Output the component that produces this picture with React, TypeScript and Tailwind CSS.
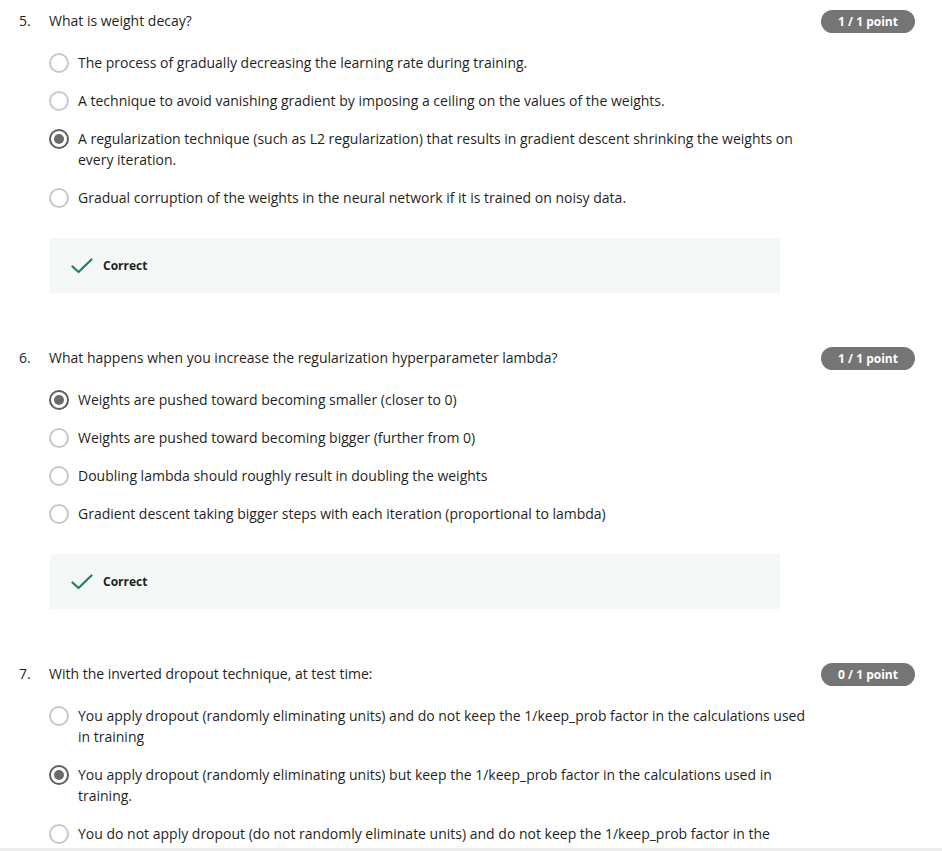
import React from 'react'

type Question = {
  num: string
  text: string
  score: string
  options: string[]
  selected: number
  correct: boolean
}

const questions: Question[] = [
  {
    num: '5.',
    text: 'What is weight decay?',
    score: '1 / 1 point',
    options: [
      'The process of gradually decreasing the learning rate during training.',
      'A technique to avoid vanishing gradient by imposing a ceiling on the values of the weights.',
      'A regularization technique (such as L2 regularization) that results in gradient descent shrinking the weights on every iteration.',
      'Gradual corruption of the weights in the neural network if it is trained on noisy data.',
    ],
    selected: 2,
    correct: true,
  },
  {
    num: '6.',
    text: 'What happens when you increase the regularization hyperparameter lambda?',
    score: '1 / 1 point',
    options: [
      'Weights are pushed toward becoming smaller (closer to 0)',
      'Weights are pushed toward becoming bigger (further from 0)',
      'Doubling lambda should roughly result in doubling the weights',
      'Gradient descent taking bigger steps with each iteration (proportional to lambda)',
    ],
    selected: 0,
    correct: true,
  },
  {
    num: '7.',
    text: 'With the inverted dropout technique, at test time:',
    score: '0 / 1 point',
    options: [
      'You apply dropout (randomly eliminating units) and do not keep the 1/keep_prob factor in the calculations used in training',
      'You apply dropout (randomly eliminating units) but keep the 1/keep_prob factor in the calculations used in training.',
      'You do not apply dropout (do not randomly eliminate units) and do not keep the 1/keep_prob factor in the calculations used in training',
    ],
    selected: 1,
    correct: false,
  },
]

function Radio({ checked }: { checked: boolean }) {
  if (checked) {
    return (
      <div className="shrink-0 w-5 h-5 rounded-full border-2 border-[#5e5e5e] flex items-center justify-center">
        <div className="w-[10px] h-[10px] rounded-full bg-[#6a6a6a]" />
      </div>
    )
  }
  return <div className="shrink-0 w-5 h-5 rounded-full border-2 border-[#c8c8c8]" />
}

function CorrectBox() {
  return (
    <div className="mt-[30px] ml-px w-[730px] h-[55px] bg-[#f3f8f6] flex items-center pl-[21px]">
      <svg width="22" height="16" viewBox="0 0 22 16" fill="none" stroke="#1f8354" strokeWidth="2.2" strokeLinecap="round" strokeLinejoin="round">
        <polyline points="1.5 8.5 7.5 14 20.5 1.5" />
      </svg>
      <span className="ml-[10px] text-[12px] font-bold text-[#1f1f1f]">Correct</span>
    </div>
  )
}

function QuestionBlock({ q, first }: { q: Question; first: boolean }) {
  return (
    <div className={first ? 'pt-[10px]' : 'pt-[54px]'}>
      <div className="flex items-start h-[23px]">
        <div className="w-[30px] leading-[21px]">{q.num}</div>
        <div className="flex-1 leading-[21px]">{q.text}</div>
        <div className="h-[23px] w-[94px] rounded-full bg-[#757575] text-white text-[12px] font-bold flex items-center justify-center">
          {q.score}
        </div>
      </div>
      <div className="ml-[30px]">
        <div className="mt-[19px] flex flex-col gap-[17px]">
          {q.options.map((opt, i) => (
            <div key={i} className="flex items-start gap-[9px] w-[760px]">
              <div className="pt-[0.5px]">
                <Radio checked={i === q.selected} />
              </div>
              <div className="leading-[21px]">{opt}</div>
            </div>
          ))}
        </div>
        {q.correct && <CorrectBox />}
      </div>
    </div>
  )
}

export default function App() {
  return (
    <div
      className="w-[942px] h-[851px] flex flex-col bg-white text-[14px] text-[#1f1f1f]"
      style={{ fontFamily: '"Open Sans", "Noto Sans", sans-serif' }}
    >
      <div className="flex-1 overflow-hidden pl-[19px] pr-[27px]">
        {questions.map((q, i) => (
          <QuestionBlock key={q.num} q={q} first={i === 0} />
        ))}
      </div>
      <div className="h-[3px] bg-[#ededed] shrink-0" />
    </div>
  )
}
